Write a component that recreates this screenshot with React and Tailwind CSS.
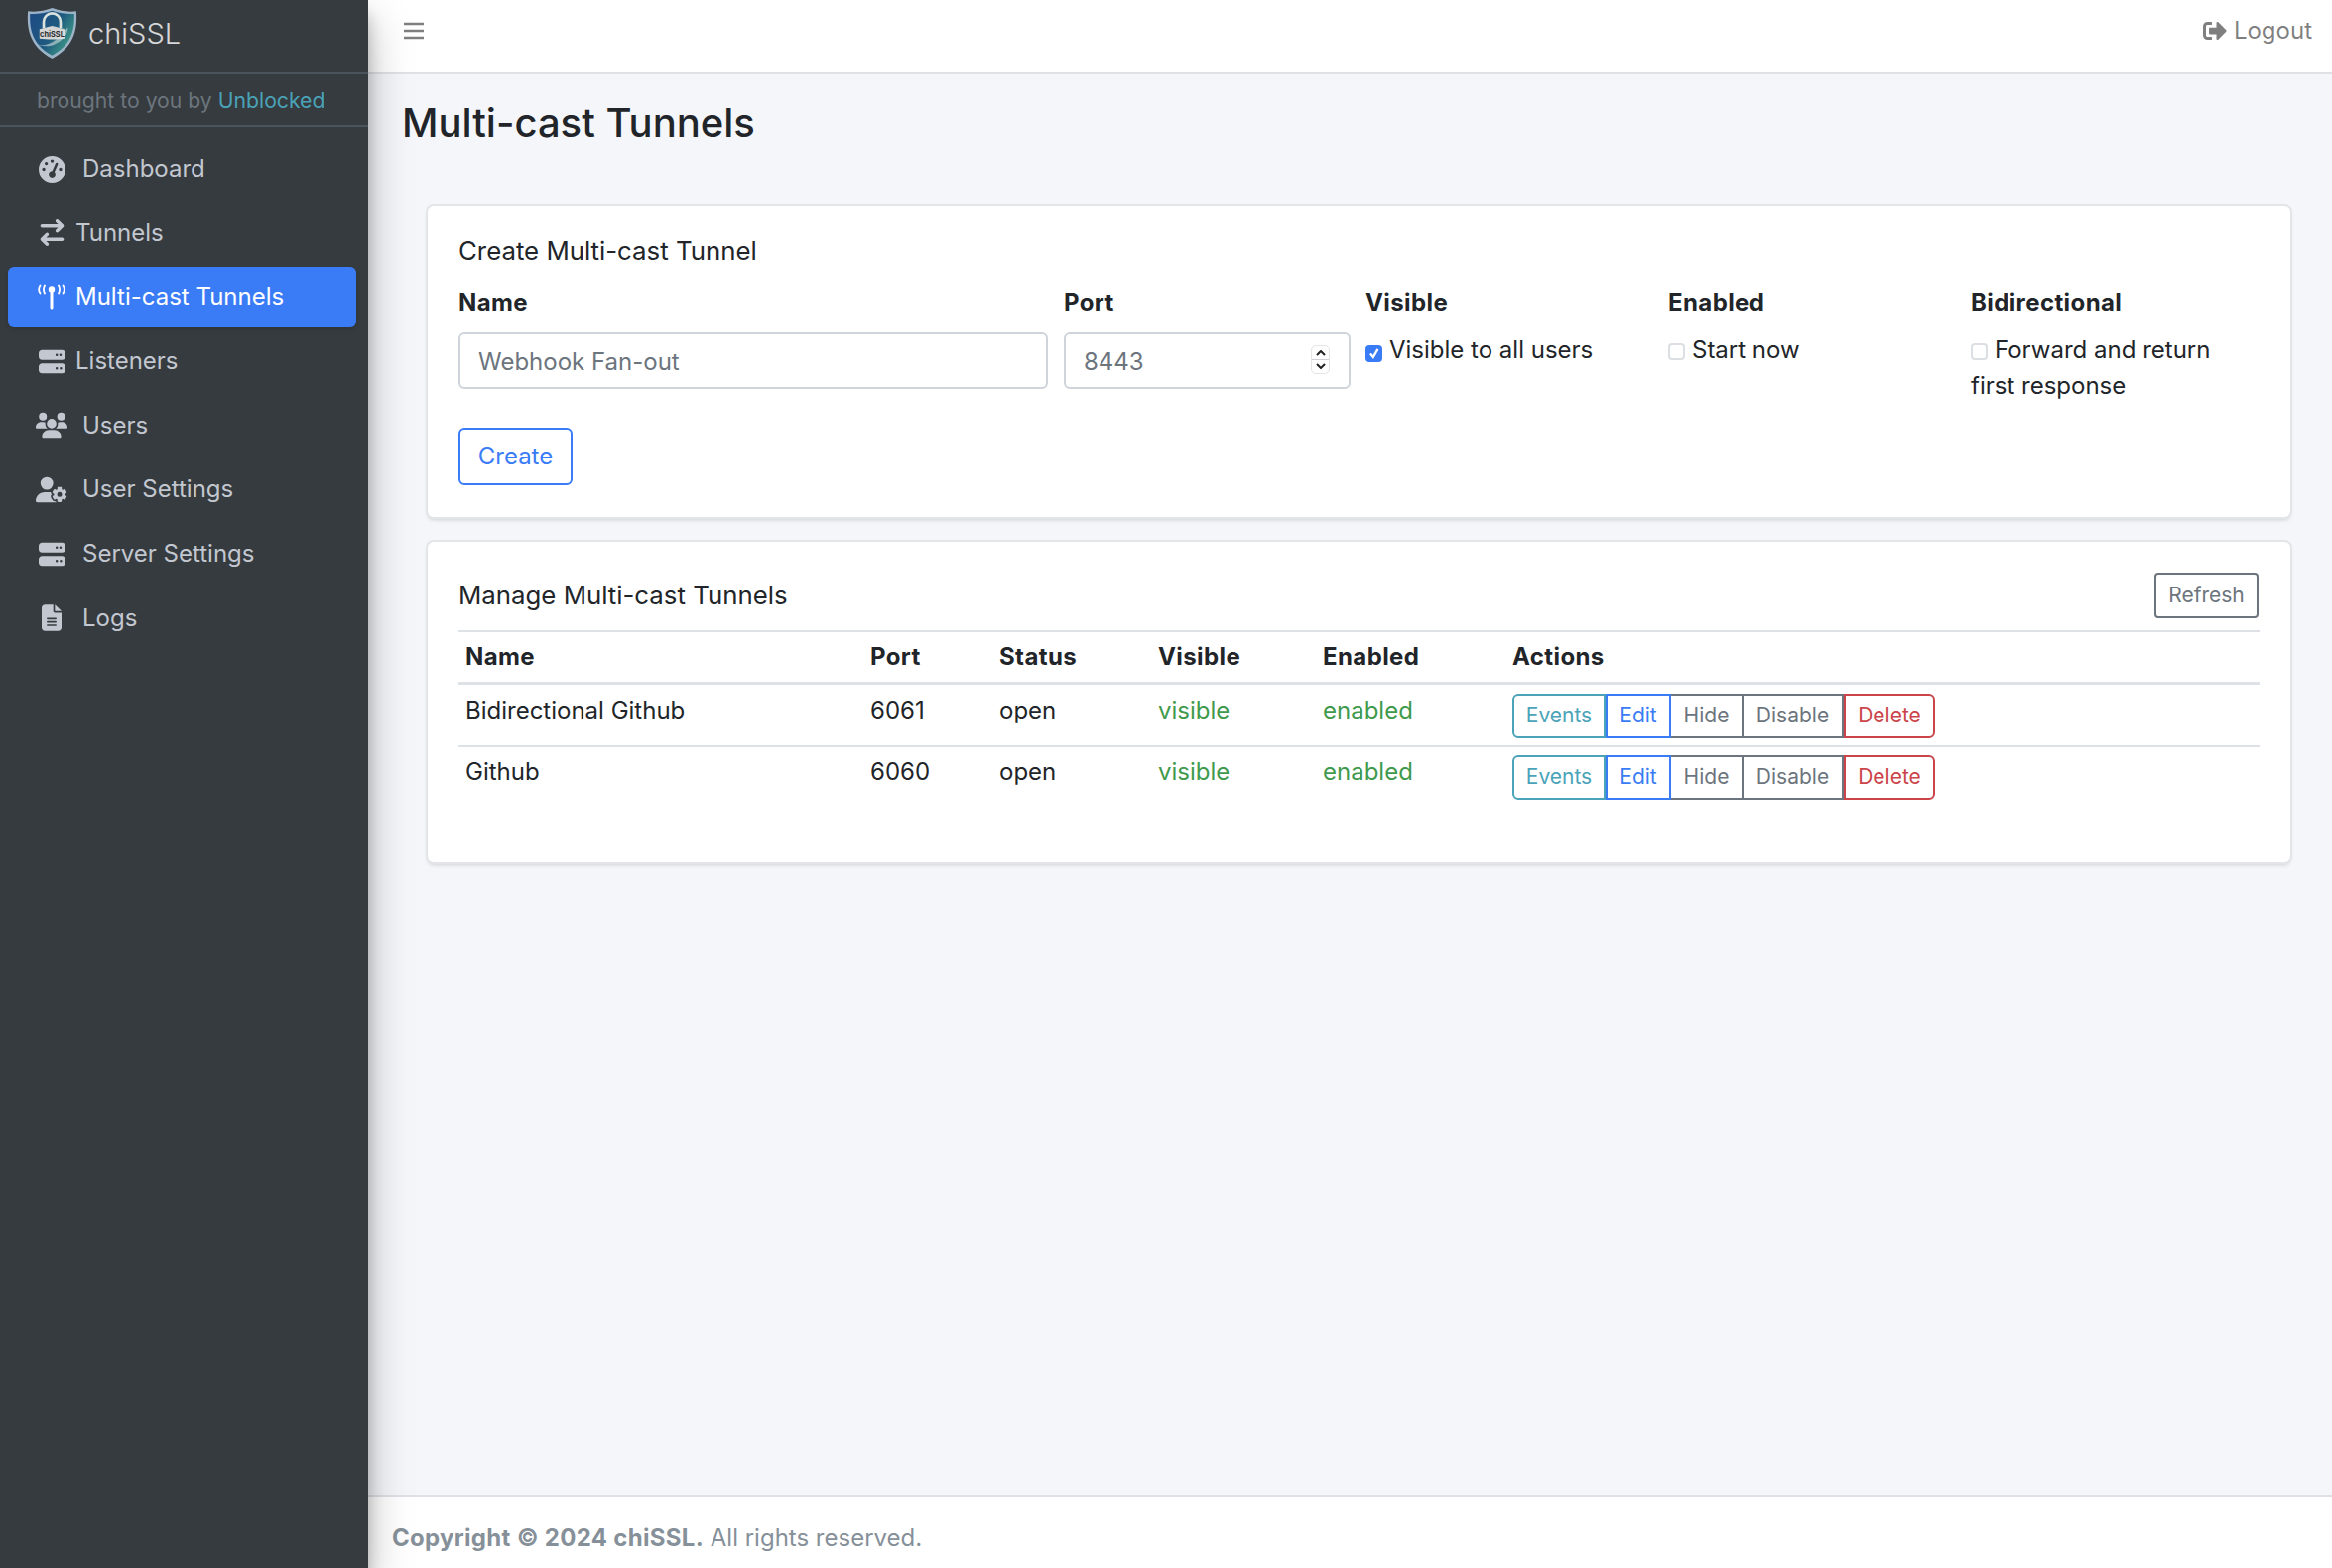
import {
  FaArrowRightArrowLeft,
  FaFileLines,
  FaGaugeHigh,
  FaServer,
  FaUserGear,
  FaUsers,
} from "react-icons/fa6";
import { FaSignOutAlt } from "react-icons/fa";

function AntennaIcon({ className }) {
  return (
    <svg viewBox="0 0 30 26" className={className} fill="none" stroke="currentColor" strokeLinecap="round">
      <circle cx="15" cy="5.5" r="3.2" fill="currentColor" stroke="none" />
      <path d="M15 7v17" strokeWidth="3" />
      <path d="M3.500 1.500c-1.800 2.600-1.800 5.400 0 8M8 1.500c-1.400 2.600-1.400 5.400 0 8" strokeWidth="1.800" />
      <path d="M26.500 1.500c1.800 2.600 1.800 5.400 0 8M22 1.500c1.400 2.600 1.400 5.400 0 8" strokeWidth="1.800" />
    </svg>
  );
}

function Logo() {
  return (
    <svg viewBox="0 0 50 50" className="w-[53px] h-[53px] -ml-[2px]">
      <defs>
        <linearGradient id="shieldFill" x1="0" y1="0" x2="1" y2="0.6">
          <stop offset="0" stopColor="#1d4a86" />
          <stop offset="0.6" stopColor="#1f5b80" />
          <stop offset="1" stopColor="#3f9a86" />
        </linearGradient>
      </defs>
      <path d="M25 1C17 4 9 5 2 4c-1 14 0 33 23 45C48 37 49 18 48 4 41 5 33 4 25 1z" fill="#9db4c8" />
      <path d="M25 3.500C17 6 10 7 4 6.500 3.500 19 5 35 25 46 45 35 46.500 19 46 6.500 40 7 33 6 25 3.500z" fill="url(#shieldFill)" />
      <path d="M17 20v-6a8 8 0 0 1 16 0v6" fill="none" stroke="#d9e2dc" strokeWidth="2.500" />
      <path d="M13 21l12-3 12 3v9c-7 1-17 1-24 0z" fill="#d4d6d6" />
      <path d="M9 34c8 6 22-2 31-15 1 9-11 18-20 18-5 0-9-1-11-3z" fill="#dfe7e4" opacity="0.55" />
      <text x="25" y="28" textAnchor="middle" fontSize="7" fontWeight="700" fill="#2a2f33" className="font-['Inter']">
        chiSSL
      </text>
    </svg>
  );
}

const navItems = [
  { label: "Dashboard", icon: <FaGaugeHigh className="w-[27px] h-[27px]" />, gap: "ml-[15px]" },
  { label: "Tunnels", icon: <FaArrowRightArrowLeft className="w-[27px] h-[27px]" />, gap: "ml-2" },
  { label: "Multi-cast Tunnels", icon: <AntennaIcon className="w-[30px] h-[26px]" />, gap: "ml-2", active: true },
  { label: "Listeners", icon: <FaServer className="w-[27px] h-[27px]" />, gap: "ml-2" },
  { label: "Users", icon: <FaUsers className="w-[33px] h-[27px]" />, gap: "ml-[15px]" },
  { label: "User Settings", icon: <FaUserGear className="w-[33px] h-[27px]" />, gap: "ml-[15px]" },
  { label: "Server Settings", icon: <FaServer className="w-[27px] h-[27px]" />, gap: "ml-[15px]" },
  { label: "Logs", icon: <FaFileLines className="w-[20px] h-[27px]" />, gap: "ml-[15px]" },
];

const tunnels = [
  { name: "Bidirectional Github", port: "6061", textPad: "pt-2", btnPad: "pt-[9px] pb-[7px]" },
  { name: "Github", port: "6060", textPad: "pt-[7px]", btnPad: "pt-2 pb-2" },
];

function Sidebar() {
  return (
    <aside className="relative z-10 w-[371px] shrink-0 bg-[#363b3f] shadow-[0_21px_42px_rgba(0,0,0,0.25),0_15px_15px_rgba(0,0,0,0.22)]">
      <div className="flex items-center h-[75px] pl-[28px] pb-[6px] border-b-2 border-[#4b545c]">
        <Logo />
        <span className="ml-[10px] text-[29px] font-light text-white/80">chiSSL</span>
      </div>
      <div className="h-[53px] pl-[37px] pt-[3px] flex items-center text-[21.2px] text-[#6c757d] border-b-2 border-[#4b545c]">
        brought to you by&nbsp;<span className="text-[#4aa3b8]">Unblocked</span>
      </div>
      <nav className="flex flex-col gap-[4.7px] pt-3 px-[8px] w-[367px]">
        {navItems.map((item) => (
          <div
            key={item.label}
            className={`flex items-center h-[60px] pl-[28px] rounded-md text-[24px] ${
              item.active ? "bg-[#3a7bf6] text-white shadow-md" : "text-[#c2c7d0]"
            }`}
          >
            <span className="w-[32px] flex justify-center">{item.icon}</span>
            <span className={item.gap}>{item.label}</span>
          </div>
        ))}
      </nav>
    </aside>
  );
}

function Check({ checked }) {
  return (
    <span
      className={`inline-flex items-center justify-center w-[17px] h-[17px] mr-[7px] rounded-[4px] align-[-2px] ${
        checked ? "bg-[#3a7bf6]" : "bg-white border-2 border-[#dcdfe3]"
      }`}
    >
      {checked && (
        <svg viewBox="0 0 12 12" className="w-[14px] h-[14px]" fill="none" stroke="#fff" strokeWidth="2">
          <path d="M2.500 6.500l2.500 3 4-7" />
        </svg>
      )}
    </span>
  );
}

function CreateCard() {
  const labelClass = "block font-bold tracking-[0.4px] mb-3";
  const inputClass =
    "w-full h-[57px] pl-[18px] pr-[19px] pt-[2px] bg-white border-2 border-[#ced4da] rounded-md placeholder:text-[#6c757d]";
  return (
    <section className="h-[313px] bg-white rounded-md px-[31px] pt-[25px] shadow-[0_0_0_2px_#e3e5e8,0_3px_4px_rgba(0,0,0,0.15)]">
      <h3 className="text-[25.800px] leading-[40px] text-[#212529]">Create Multi-cast Tunnel</h3>
      <div className="grid grid-cols-[594px_288px_289px_289px_289px] gap-x-4 mt-[14px] text-[24px] leading-[36px] text-[#212529]">
        <div>
          <label className={labelClass}>Name</label>
          <input placeholder="Webhook Fan-out" className={inputClass} />
        </div>
        <div className="w-[289px]">
          <label className={labelClass}>Port</label>
          <div className="relative">
            <input placeholder="8443" className={inputClass} />
            <div className="absolute right-[21px] top-[13px] w-[19px] h-[29px] flex flex-col items-center justify-center border border-[#e3e5e8] rounded-[5px] text-[#222]">
              <span className="h-[13px] w-full flex items-center justify-center border-b border-[#cfd2d6]">
                <svg viewBox="0 0 10 6" className="w-[10px] h-[6px]" fill="none" stroke="currentColor" strokeWidth="2">
                  <path d="M1 5l4-4 4 4" />
                </svg>
              </span>
              <span className="h-[13px] w-full flex items-center justify-center">
                <svg viewBox="0 0 10 6" className="w-[10px] h-[6px]" fill="none" stroke="currentColor" strokeWidth="2">
                  <path d="M1 1l4 4 4-4" />
                </svg>
              </span>
            </div>
          </div>
        </div>
        <div>
          <label className={labelClass}>Visible</label>
          <Check checked />
          Visible to all users
        </div>
        <div>
          <label className={labelClass}>Enabled</label>
          <Check />
          Start now
        </div>
        <div>
          <label className={labelClass}>Bidirectional</label>
          <Check />
          Forward and return first response
        </div>
      </div>
      <button className="mt-6 w-[115px] h-[58px] border-2 border-[#3a7bf6] rounded-md text-[24px] text-[#3a7bf6]">
        Create
      </button>
    </section>
  );
}

function ActionButtons() {
  const base = "h-[45px] text-[21px] border-2 border-l-0";
  return (
    <div className="flex">
      <button className="w-[94px] h-[45px] text-[21px] border-2 rounded-l-md border-[#4aa3b8] text-[#4aa3b8]">Events</button>
      <button className={`w-[66px] ${base} border-l-2 border-[#3a7bf6] text-[#3a7bf6]`}>Edit</button>
      <button className={`w-[73px] ${base} border-[#6c757d] text-[#6c757d]`}>Hide</button>
      <button className={`w-[101px] ${base} border-[#6c757d] text-[#6c757d]`}>Disable</button>
      <button className="w-[92px] h-[45px] text-[21px] border-2 rounded-r-md border-[#cb444a] text-[#cb444a]">Delete</button>
    </div>
  );
}

function ManageCard() {
  const thClass = "px-[7px] font-bold tracking-[0.4px]";
  const tdClass = "pl-[7px] pr-[6px] align-top";
  return (
    <section className="h-[323px] bg-white rounded-md px-[31px] pt-[31px] shadow-[0_0_0_2px_#e3e5e8,0_3px_4px_rgba(0,0,0,0.15)]">
      <div className="flex items-center justify-between mb-3">
        <h3 className="text-[25.800px] text-[#212529]">Manage Multi-cast Tunnels</h3>
        <button className="w-[105px] h-[46px] mr-[1px] border-2 border-[#6c757d] rounded text-[21px] text-[#6c757d]">Refresh</button>
      </div>
      <table className="w-full table-fixed text-[24px] leading-[36px] text-[#212529]">
        <colgroup>
          <col className="w-[408px]" />
          <col className="w-[130px]" />
          <col className="w-[160px]" />
          <col className="w-[166px]" />
          <col className="w-[191px]" />
          <col />
        </colgroup>
        <thead>
          <tr className="border-t-2 border-b-[3px] border-[#dee2e6] text-left">
            <th className={`${thClass} h-[52px]`}>Name</th>
            <th className={thClass}>Port</th>
            <th className={thClass}>Status</th>
            <th className={thClass}>Visible</th>
            <th className={thClass}>Enabled</th>
            <th className={thClass}>Actions</th>
          </tr>
        </thead>
        <tbody>
          {tunnels.map((t, i) => (
            <tr key={t.name} className={i === 0 ? "border-b-2 border-[#dee2e6]" : ""}>
              <td className={`${tdClass} ${t.textPad}`}>{t.name}</td>
              <td className={`${tdClass} ${t.textPad}`}>{t.port}</td>
              <td className={`${tdClass} ${t.textPad}`}>open</td>
              <td className={`${tdClass} text-[#3f9a4d] ${t.textPad}`}>visible</td>
              <td className={`${tdClass} text-[#3f9a4d] ${t.textPad}`}>enabled</td>
              <td className={`pl-[7px] pr-[6px] align-top ${t.btnPad}`}>
                <ActionButtons />
              </td>
            </tr>
          ))}
        </tbody>
      </table>
    </section>
  );
}

export default function App() {
  return (
    <div className="flex min-h-screen h-[1580px] font-['Inter',sans-serif] bg-[#f4f6f9] overflow-hidden">
      <Sidebar />
      <div className="flex-1 flex flex-col">
        <header className="flex items-center justify-between h-[75px] shrink-0 pl-[35px] pr-5 pb-[12px] bg-white border-b-2 border-[#dee2e6] text-black/50">
          <svg viewBox="0 0 22 20" className="w-[22px] h-[20px]" fill="none" stroke="currentColor" strokeWidth="2.500">
            <path d="M1 3h20M1 10h20M1 17h20" />
          </svg>
          <div className="flex items-center gap-[7px] text-[24px]">
            <FaSignOutAlt className="w-[24px] h-[24px]" />
            Logout
          </div>
        </header>
        <main className="flex-1">
          <h1 className="h-[98px] mb-[35px] pl-[34px] flex items-center text-[40px] font-medium text-[#212529]">Multi-cast Tunnels</h1>
          <div className="flex flex-col gap-[25px] pl-[60px] pr-[42px]">
            <CreateCard />
            <ManageCard />
          </div>
        </main>
        <footer className="h-[74px] shrink-0 flex items-center pl-6 pt-3 bg-white border-t-2 border-[#dee2e6] text-[24px] text-[#869099]">
          <strong className="font-bold tracking-[0.3px]">Copyright © 2024 chiSSL.</strong>&nbsp;All rights reserved.
        </footer>
      </div>
    </div>
  );
}
